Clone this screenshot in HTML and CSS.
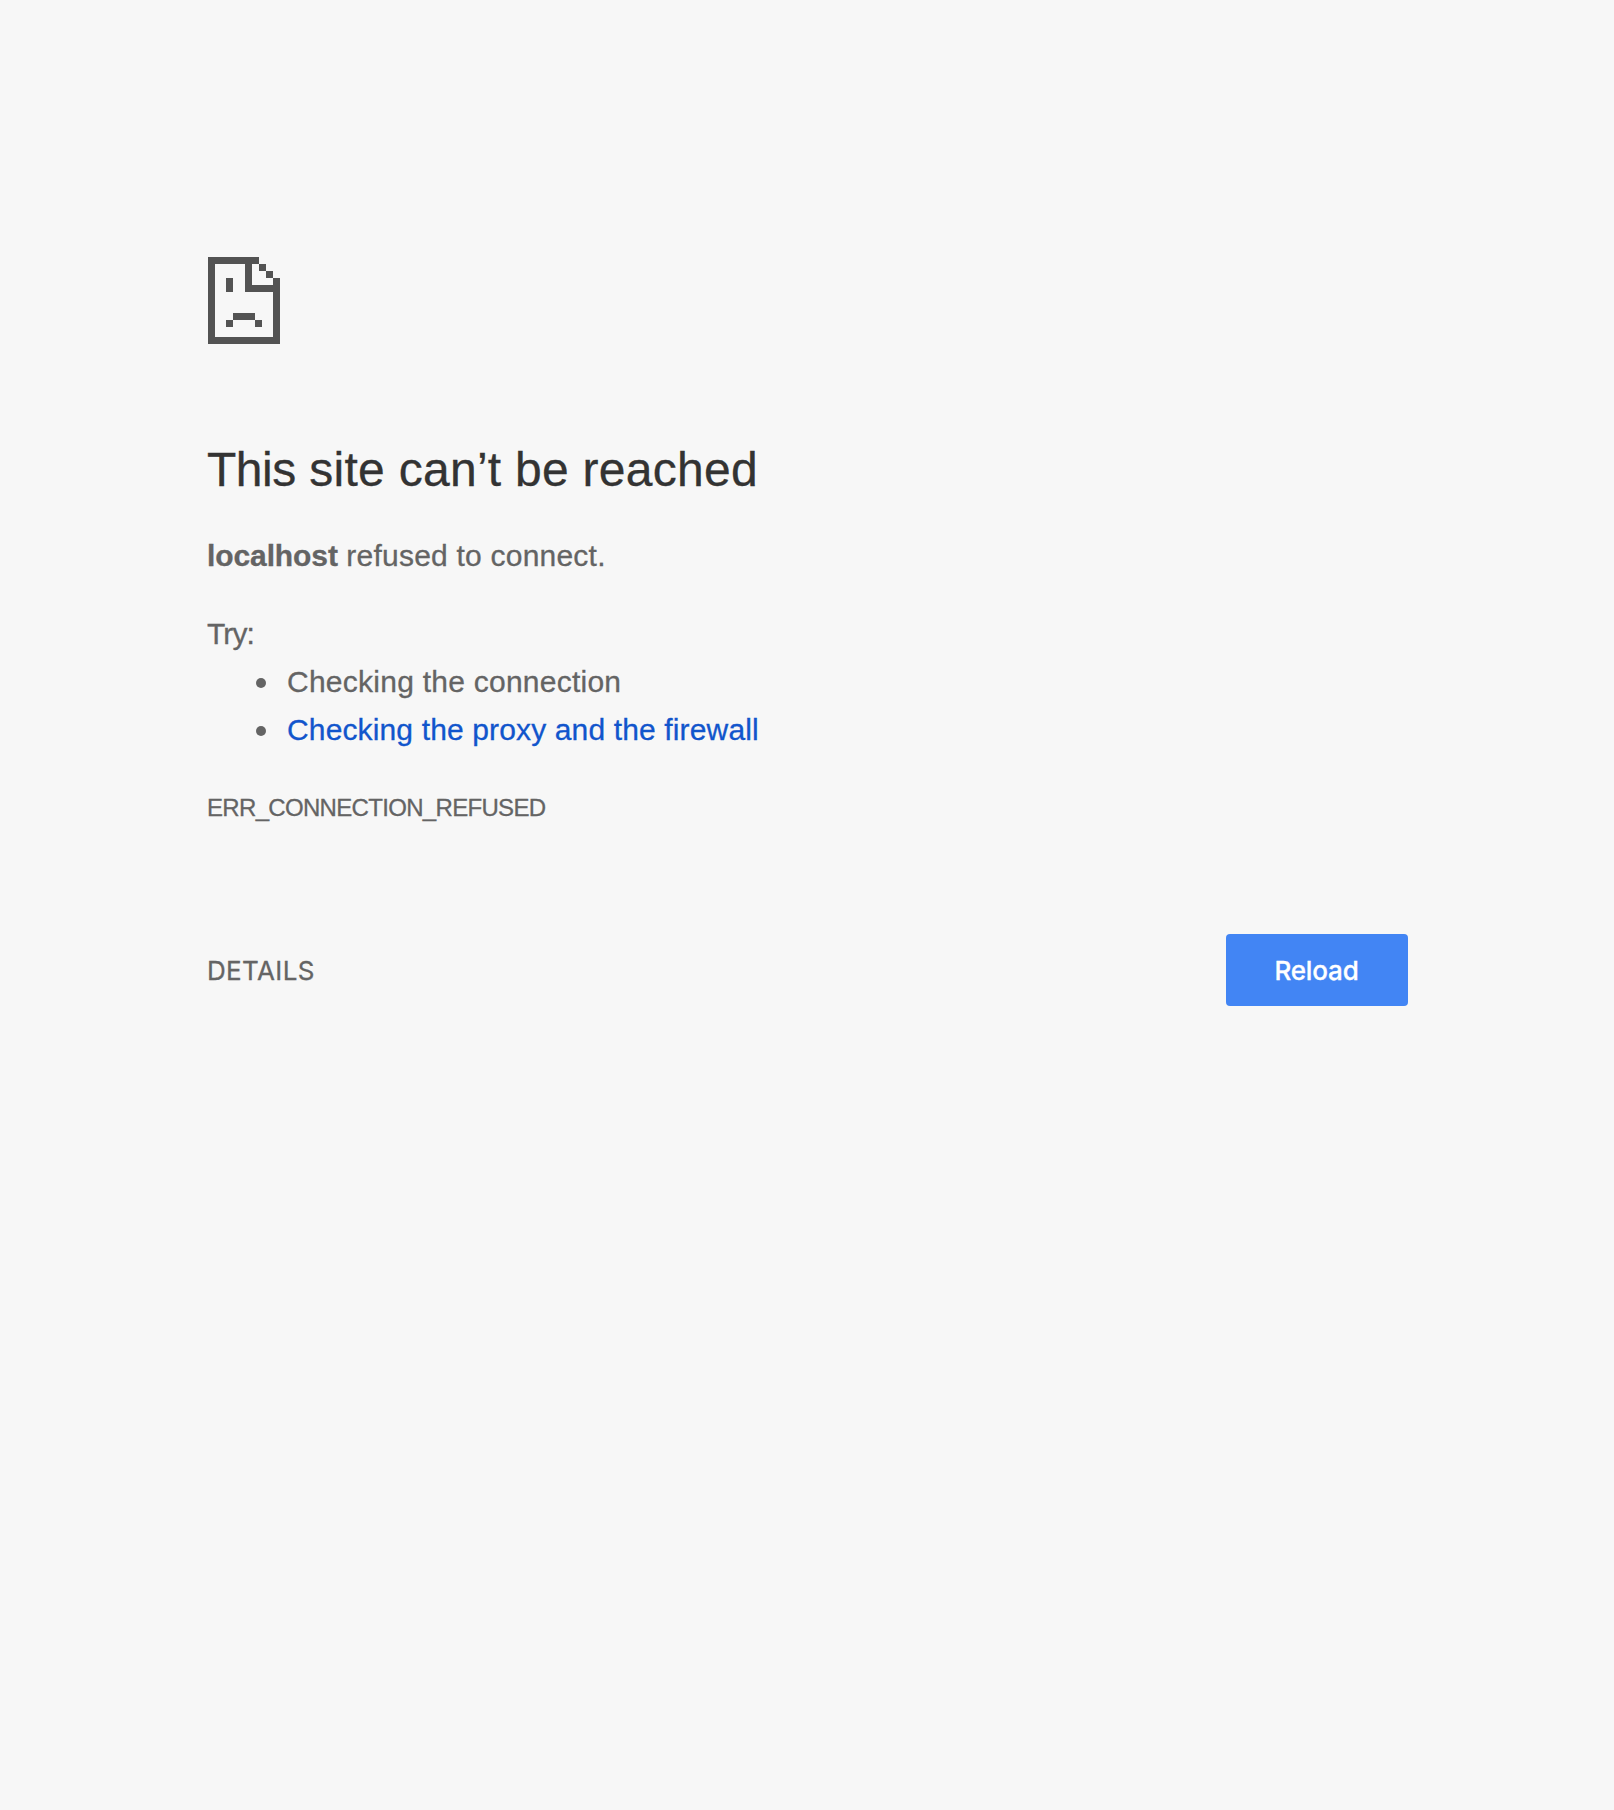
FILE: index.html
```html
<!DOCTYPE html>
<html lang="en">
<head>
<meta charset="utf-8">
<title>localhost</title>
<link rel="stylesheet" href="styles.css">
</head>
<body>
<main class="error-page">
  <svg class="sad-page-icon" width="72" height="87" viewBox="0 0 72 87" shape-rendering="crispEdges" aria-hidden="true">
    <path d="M0 0H51V7H44V28H65V21H72V87H0ZM7 7V80H65V35H37V7ZM51 7H58V14H51ZM58 14H65V21H58ZM18 21H25V35H18ZM25 56H47V63H25ZM18 63H25V70H18ZM47 63H54V70H47Z" fill="#535353" fill-rule="evenodd"/>
  </svg>
  <h1 class="title"><span class="title-lead">This</span> site can’t be reached</h1>
  <p class="summary"><strong class="host">localhost</strong> refused to connect.</p>
  <div class="suggestions">
    <p class="suggestions-heading">Try:</p>
    <ul class="suggestions-list">
      <li>Checking the connection</li>
      <li><a class="link" href="#proxy">Checking the proxy and the firewall</a></li>
    </ul>
  </div>
  <div class="error-code">ERR_CONNECTION_REFUSED</div>
  <div class="actions">
    <button class="details-button" type="button">DETAILS</button>
    <button class="reload-button" type="button">Reload</button>
  </div>
</main>
</body>
</html>
```

FILE: styles.css
```css
body {
  margin: 0;
  min-height: 100vh;
  background: #f7f7f7;
  color: #646464;
  font: 30px/48px "Liberation Sans", Arial, sans-serif;
  -webkit-text-stroke: 0.3px;
}

.error-page {
  width: 1200px;
  margin: 0 auto;
  padding-top: 257px;
}

.sad-page-icon {
  display: block;
  margin-left: 1px;
}

.title {
  margin: 97px 0 33px;
  color: #333;
  font-size: 48px;
  font-weight: 400;
  line-height: 58px;
  letter-spacing: 0.27px;
}

.title-lead {
  letter-spacing: -0.5px;
}

.summary {
  margin: 0 0 30px;
  letter-spacing: 0.22px;
}

.host {
  font-weight: 700;
  letter-spacing: -0.1px;
}

.suggestions {
  letter-spacing: 0.25px;
}

.suggestions-heading {
  margin: 0;
  letter-spacing: -0.9px;
}

.suggestions-list {
  margin: 0;
  padding-left: 80px;
  list-style: none;
}

.suggestions-list li::before {
  content: "";
  display: inline-block;
  width: 10px;
  height: 10px;
  margin: 0 21px 0 -31px;
  border-radius: 50%;
  background: #646464;
  vertical-align: 4px;
}

.link {
  color: #1155cc;
  letter-spacing: 0.14px;
  text-decoration: none;
}

.error-code {
  margin-top: 35px;
  font-size: 24px;
  line-height: 38px;
  letter-spacing: -0.68px;
}

.actions {
  display: flex;
  justify-content: space-between;
  margin-top: 107px;
  margin-right: -1px;
}

.details-button,
.reload-button {
  height: 72px;
  border: 0;
  font: 26px/70px Inter, sans-serif;
}

.details-button {
  padding: 2px 0 0;
  background: none;
  color: #646464;
  letter-spacing: 0.35px;
}

.reload-button {
  width: 182px;
  padding: 2px 1px 0 0;
  border-radius: 4px;
  background: #4285f4;
  color: #fff;
  font-weight: 500;
  letter-spacing: -0.15px;
}
```
